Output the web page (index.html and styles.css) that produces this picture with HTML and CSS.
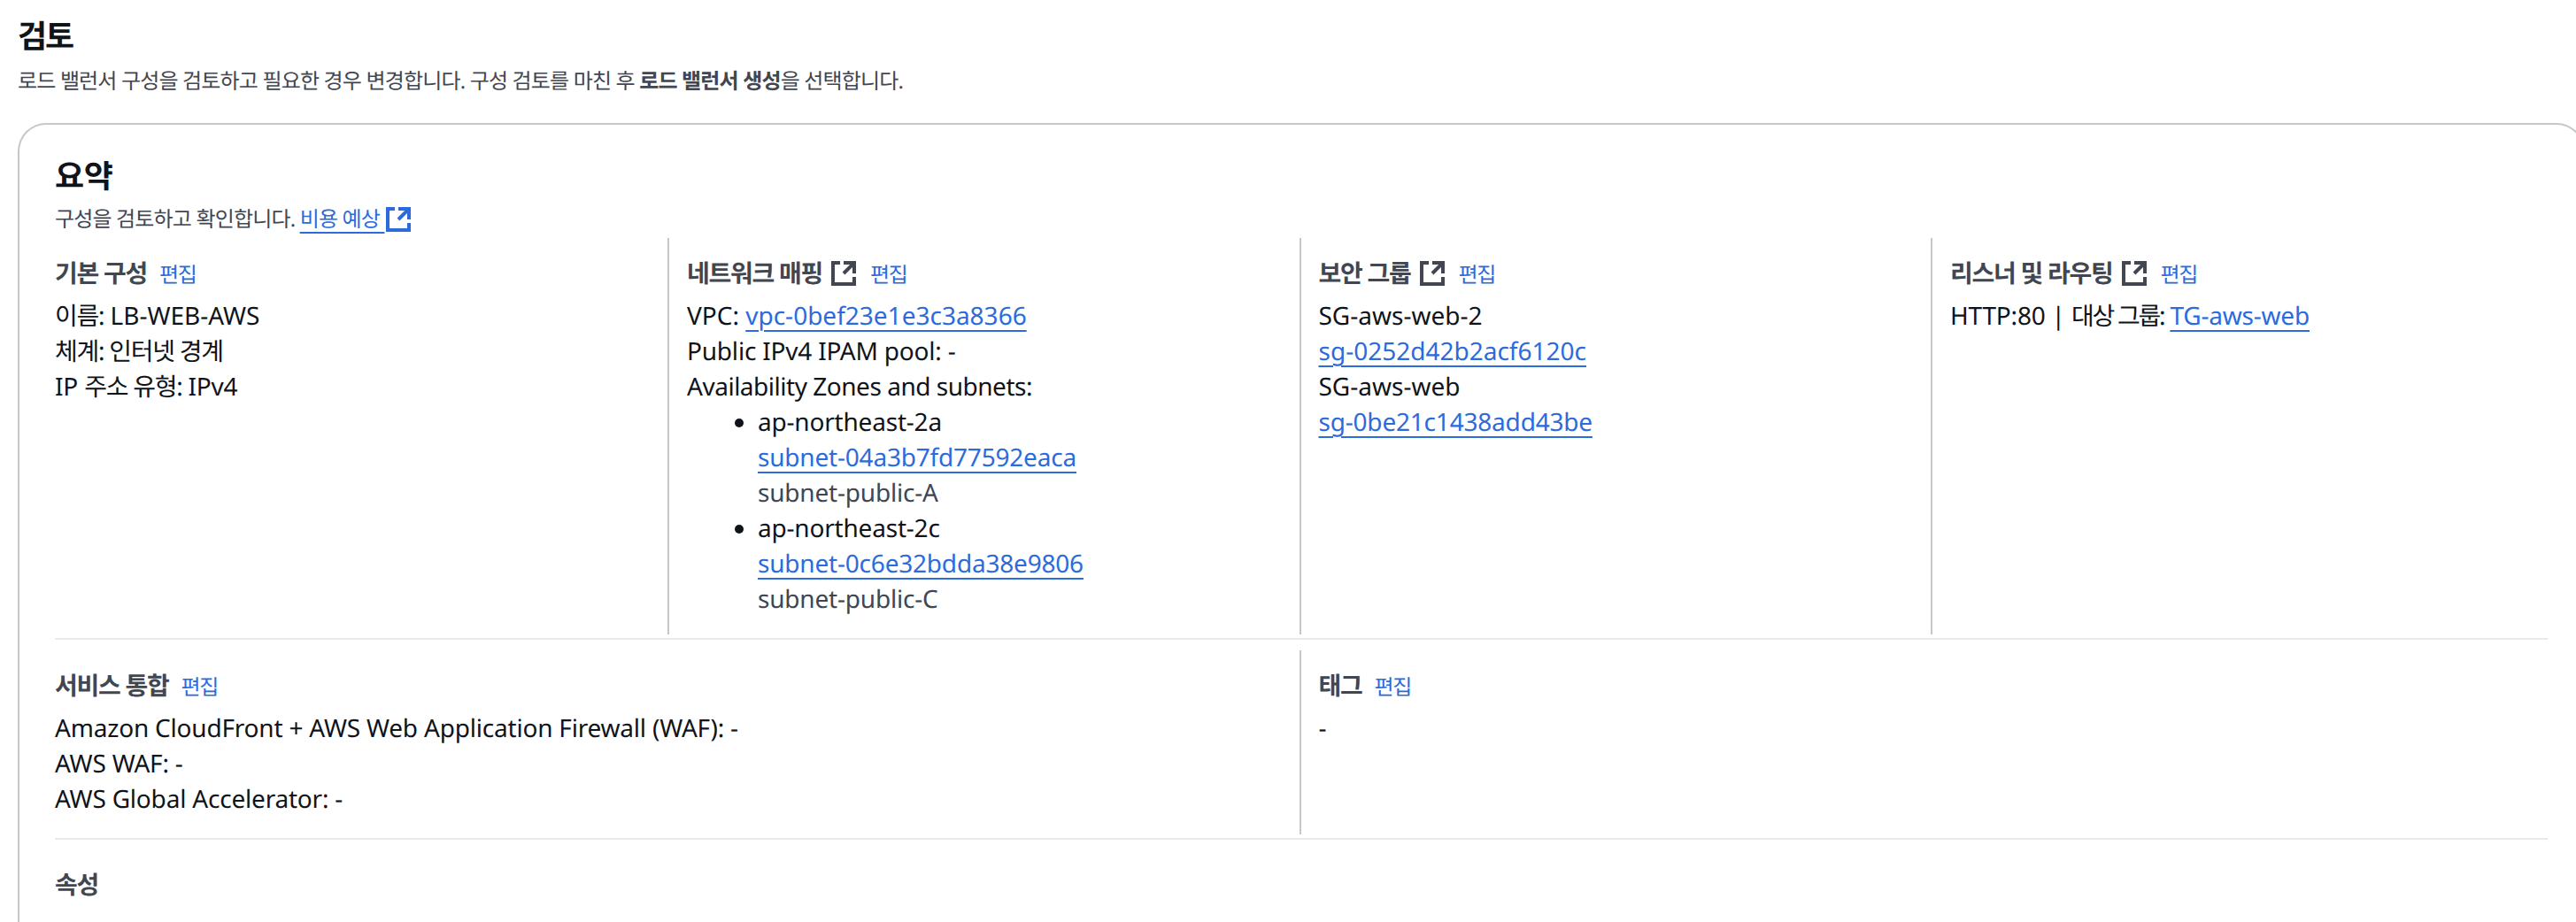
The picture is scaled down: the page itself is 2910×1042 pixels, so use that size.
FILE: index.html
```html
<!DOCTYPE html>
<html lang="ko">
<head>
<meta charset="utf-8">
<title>검토</title>
<link rel="stylesheet" href="styles.css">
</head>
<body>
<svg class="defs" width="0" height="0" aria-hidden="true"><symbol id="ext" viewBox="0 0 16 16"><path fill="none" stroke="currentColor" stroke-width="2" d="M14 8.01v-6H8M14.02 2 8 8.01M6 2.01H2v12h12v-3.99"/></symbol></svg>
<header class="page-head">
  <h1 class="page-title">검토</h1>
  <p class="page-desc">로드 밸런서 구성을 검토하고 필요한 경우 변경합니다. 구성 검토를 마친 후 <b>로드 밸런서 생성</b>을 선택합니다.</p>
</header>
<section class="card">
  <h2 class="card-title">요약</h2>
  <p class="card-desc">구성을 검토하고 확인합니다. <a class="link" href="#">비용 예상 </a><svg class="icon icon-link"><use href="#ext"/></svg></p>
  <div class="grid grid-4">
    <div class="col">
      <h3 class="sec-head"><span>기본 구성</span><a class="edit" href="#">편집</a></h3>
      <div class="line flush"><span class="ko">이름:</span> LB-WEB-AWS</div>
      <div class="line"><span class="ko">체계: 인터넷 경계</span></div>
      <div class="line">IP <span class="ko">주소 유형:</span> IPv4</div>
    </div>
    <div class="col">
      <h3 class="sec-head"><span>네트워크 매핑</span><svg class="icon"><use href="#ext"/></svg><a class="edit" href="#">편집</a></h3>
      <div class="line flush">VPC: <a class="link" href="#">vpc-0bef23e1e3c3a8366</a></div>
      <div class="line">Public IPv4 IPAM pool: -</div>
      <div class="line tight">Availability Zones and subnets:</div>
      <ul class="zones">
        <li>ap-northeast-2a<br><a class="link" href="#">subnet-04a3b7fd77592eaca</a><br><span class="muted">subnet-public-A</span></li>
        <li>ap-northeast-2c<br><a class="link" href="#">subnet-0c6e32bdda38e9806</a><br><span class="muted">subnet-public-C</span></li>
      </ul>
    </div>
    <div class="col">
      <h3 class="sec-head"><span>보안 그룹</span><svg class="icon"><use href="#ext"/></svg><a class="edit" href="#">편집</a></h3>
      <div class="line flush">SG-aws-web-2</div>
      <div class="line flush"><a class="link" href="#">sg-0252d42b2acf6120c</a></div>
      <div class="line flush">SG-aws-web</div>
      <div class="line"><a class="link" href="#">sg-0be21c1438add43be</a></div>
    </div>
    <div class="col">
      <h3 class="sec-head"><span>리스너 및 라우팅</span><svg class="icon"><use href="#ext"/></svg><a class="edit" href="#">편집</a></h3>
      <div class="line">HTTP:80 | <span class="ko ko-tight">대상 그룹:</span> <a class="link" href="#">TG-aws-web</a></div>
    </div>
  </div>
  <hr class="sep">
  <div class="grid grid-2">
    <div class="col">
      <h3 class="sec-head"><span>서비스 통합</span><a class="edit" href="#">편집</a></h3>
      <div class="line">Amazon CloudFront + AWS Web Application Firewall (WAF): -</div>
      <div class="line">AWS WAF: -</div>
      <div class="line">AWS Global Accelerator: -</div>
    </div>
    <div class="col">
      <h3 class="sec-head"><span>태그</span><a class="edit" href="#">편집</a></h3>
      <div class="line">-</div>
    </div>
  </div>
  <hr class="sep">
  <h3 class="sec-head sec-last"><span>속성</span></h3>
</section>
</body>
</html>
```
FILE: styles.css
```css
html, body { margin: 0; padding: 0; height: 1042px; overflow: hidden; background: #fff; }
body { font-family: "Noto Sans", "Noto Sans CJK KR", sans-serif; font-size: 28px; line-height: 40px; color: #0f141a; text-rendering: geometricPrecision; }
.defs { position: absolute; }
.line, .zones { letter-spacing: -0.2px; }
.flush { letter-spacing: 0; }
.tight { letter-spacing: -0.48px; }
.ko { letter-spacing: -0.045em; }
.ko-tight { letter-spacing: -0.08em; }
.page-head { padding: 17px 0 0 20px; }
.page-title { margin: 0; font-size: 36px; line-height: 48px; font-weight: 700; letter-spacing: -0.06em; }
.page-desc { margin: 11px 0 0; font-size: 24px; line-height: 32px; color: #424650; letter-spacing: -0.035em; }
.page-desc b { font-weight: 700; }
.card { box-sizing: border-box; width: 2900px; height: 1000px; margin: 31px 0 0 20px; padding: 34px 40px 0; border: 2px solid #c6c6cd; border-bottom: 0; border-radius: 32px 32px 0 0; }
.card-title { margin: 0 0 5px; font-size: 36px; line-height: 48px; font-weight: 700; letter-spacing: -0.01em; }
.card-desc { margin: 0 0 1px; font-size: 24px; line-height: 40px; color: #424650; display: flex; align-items: center; white-space: pre; letter-spacing: -0.035em; }
.link { color: #2b6bdc; text-decoration: underline 2px; text-underline-offset: 6px; }
.icon { width: 32px; height: 32px; flex: none; color: #424650; }
.icon-link { color: #2b6bdc; }
.grid { display: grid; margin: 0 -16.5px 0 -21.5px; }
.grid-4 { grid-template-columns: repeat(4, 1fr); }
.grid-2 { grid-template-columns: repeat(2, 1fr); }
.col { padding: 20px; border-left: 2px solid #c6c6cd; }
.col:first-child { border-left: 0; padding-left: 21.5px; }
.sec-head { display: flex; align-items: center; gap: 8px; margin: 0 0 8px; font-size: 28px; line-height: 40px; font-weight: 700; color: #424650; letter-spacing: -0.045em; }
.sec-last { margin: 0; padding-top: 31px; }
.edit { margin: 4px 0 0 6px; font-size: 24px; line-height: 34px; font-weight: 400; color: #2b6bdc; text-decoration: none; }
.zones { margin: 0; padding-left: 80px; }
.muted { color: #424650; }
.sep { height: 2px; margin: 4px 0 0; border: 0; background: #e9e9ed; }
.grid-2 .col { margin-top: 12px; }
```
